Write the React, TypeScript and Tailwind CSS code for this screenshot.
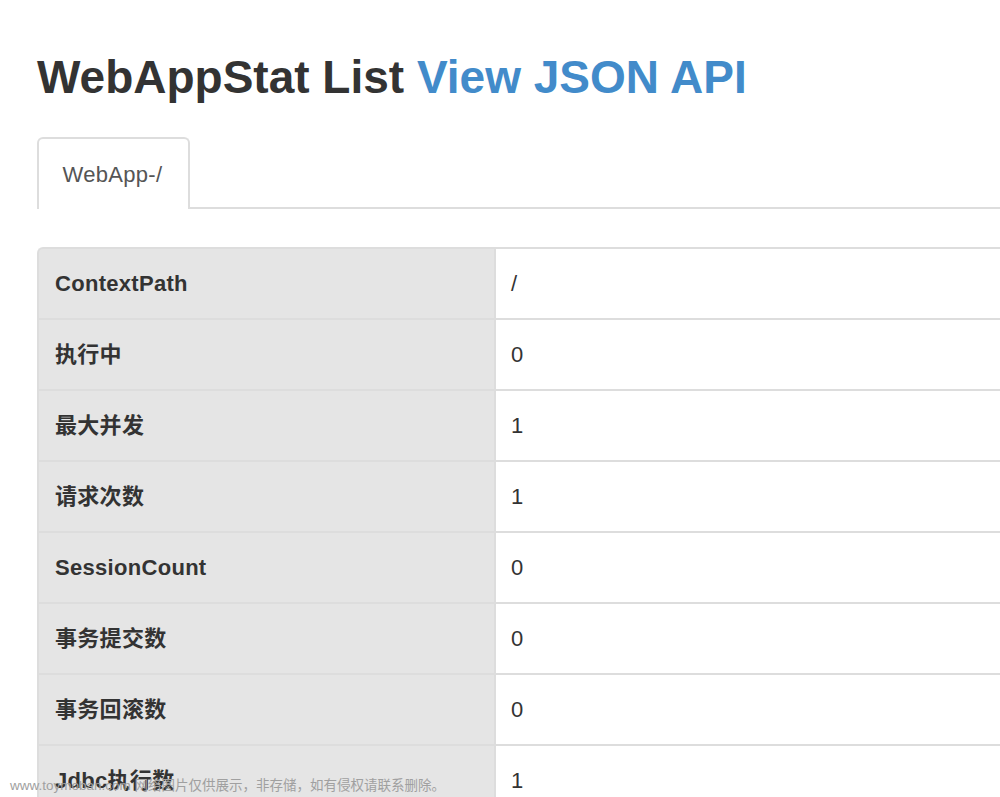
import React from 'react';

const rows: [string, string][] = [
    ["ContextPath", "/"],
    ["执行中", "0"],
    ["最大并发", "1"],
    ["请求次数", "1"],
    ["SessionCount", "0"],
    ["事务提交数", "0"],
    ["事务回滚数", "0"],
    ["Jdbc执行数", "1"],
    ["Jdbc时间", "0"],
];

const font = { fontFamily: '"Liberation Sans", "Noto Sans CJK SC", sans-serif' };

export default function App() {
    return (
        <div className="relative h-[797px] w-[1000px] overflow-hidden bg-white text-[#333]" style={font}>
            <div className="pl-[37px]">
                <h1 className="pt-[49px] text-[46px] font-bold leading-[56px]">
                    WebAppStat List <a className="text-[#428bca]" href="#">View JSON API</a>
                </h1>

                {/* tabs */}
                <div className="mt-[32px] flex border-b-2 border-[#ddd]">
                    <div className="-mb-[2px] flex h-[72px] w-[153px] items-center justify-center rounded-t-[6px] border-2 border-b-0 border-[#ddd] bg-white pr-[2px] text-[22px] tracking-[0.3px] text-[#555]">
                        WebApp-/
                    </div>
                </div>

                {/* stats table */}
                <table className="mt-[38px] w-[1000px] border-separate border-spacing-0 text-[22px]">
                    <tbody>
                        {rows.map(([k, v], i) => (
                            <tr key={k} className="h-[71px]">
                                <td className={`w-[457px] border-l-2 border-t-2 border-[#ddd] bg-[#e5e5e5] pl-[16px] font-bold tracking-[0.3px] ${i === 0 ? "rounded-tl-[6px]" : ""}`}>
                                    {k}
                                </td>
                                <td className="border-l-2 border-t-2 border-[#ddd] bg-white pl-[15px]">{v}</td>
                            </tr>
                        ))}
                    </tbody>
                </table>
            </div>

            <div className="absolute bottom-[1px] left-[10px] text-[13.5px] text-[#a0a0a0]">
                www.toymoban.com 网络图片仅供展示，非存储，如有侵权请联系删除。
            </div>
        </div>
    );
}
